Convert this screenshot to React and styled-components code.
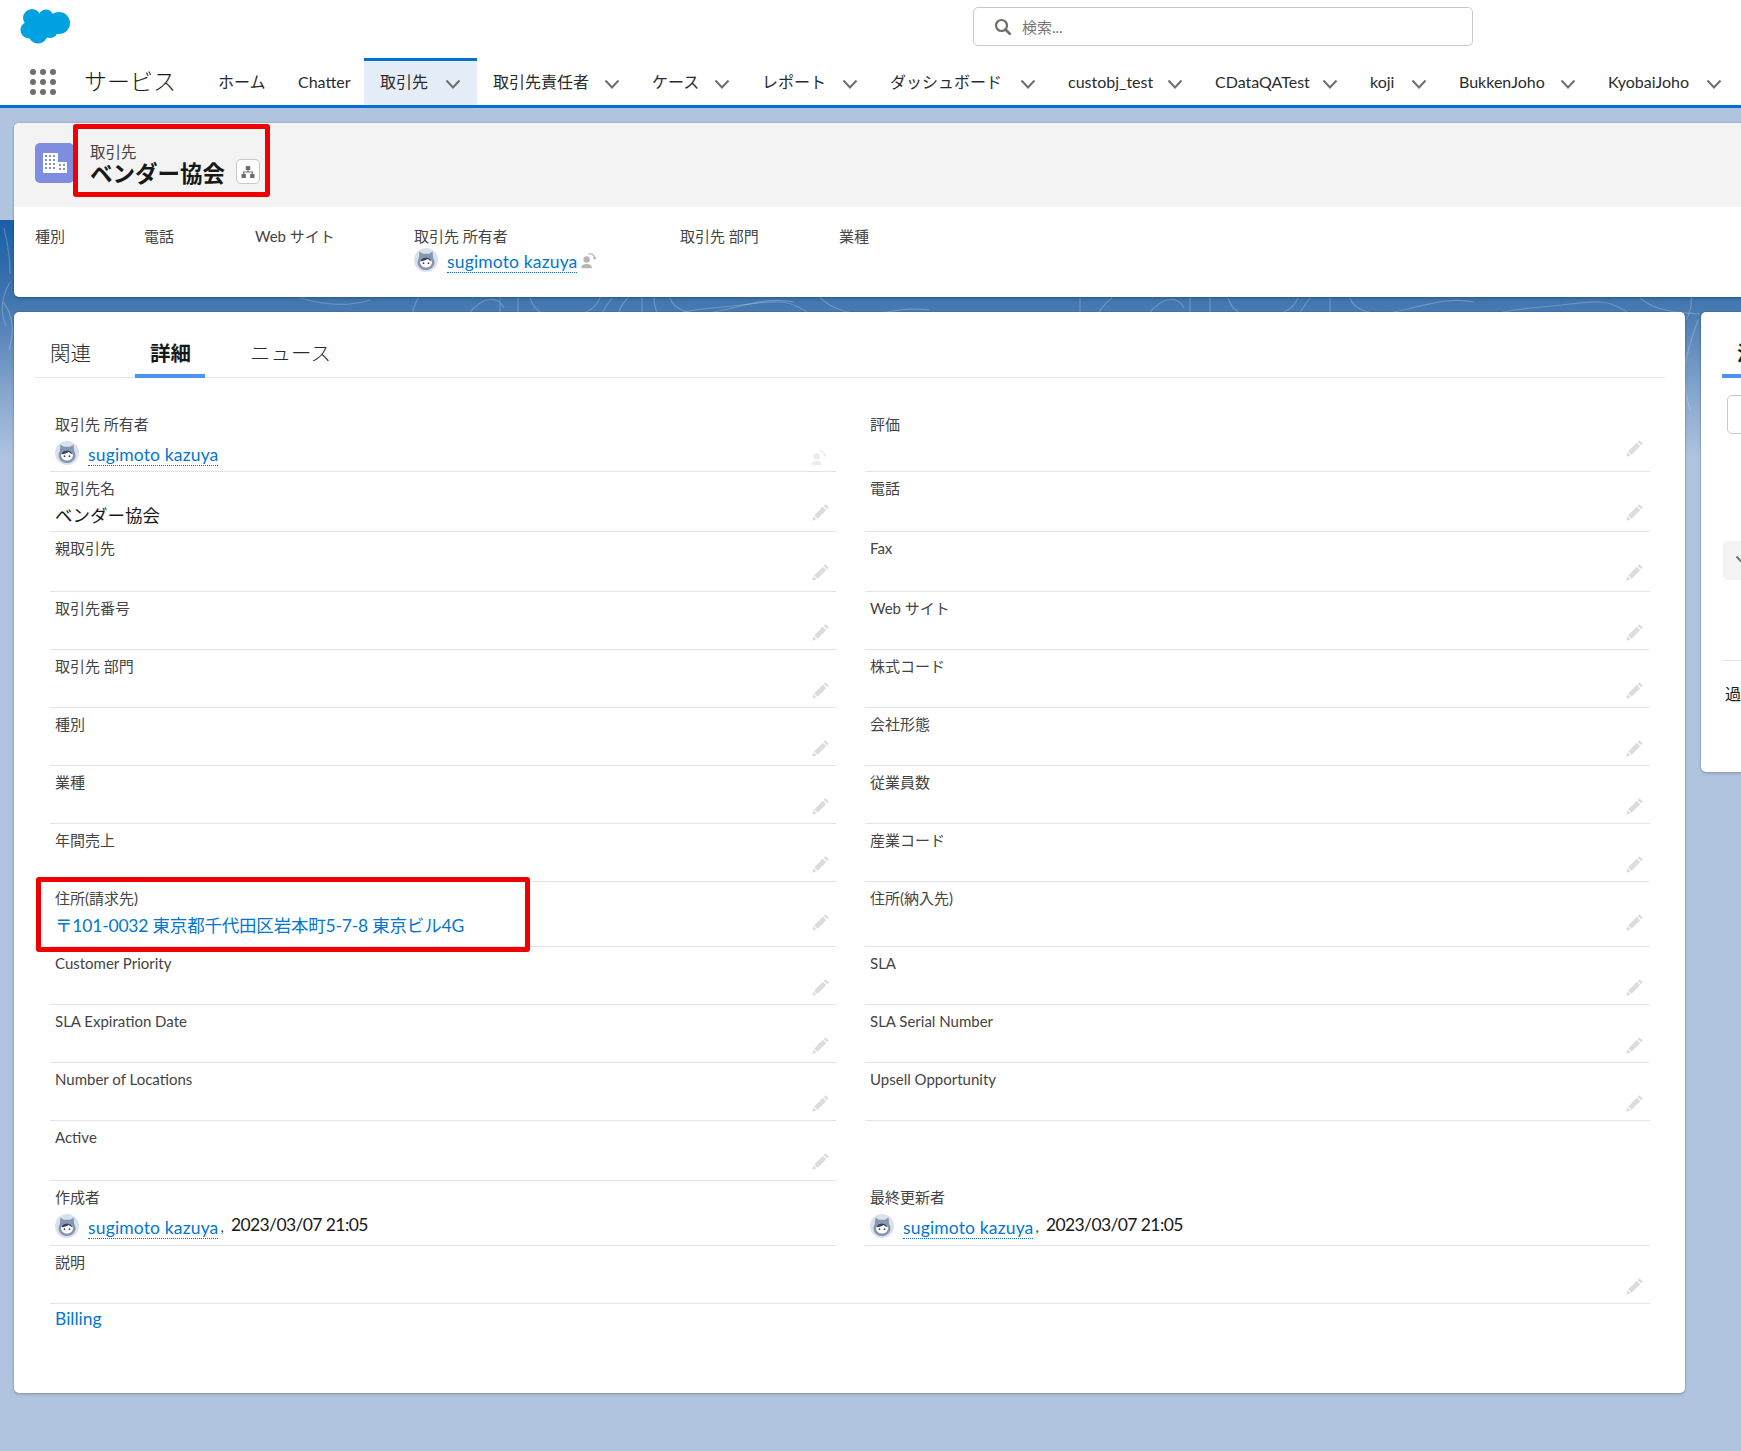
import React from "react"
import styled, { createGlobalStyle } from "styled-components"

const GlobalStyle = createGlobalStyle`
    html, body {
        margin: 0;
        padding: 0;
        background: #b0c4df;
        overflow: hidden;
    }
    body {
        font-family: "Lato", "Noto Sans CJK JP", sans-serif;
        color: #181818;
    }
    * {
        box-sizing: border-box;
    }
`

const Page = styled.div`
    position: relative;
    width: 1741px;
    height: 1451px;
    overflow: hidden;
    background: #b0c4df;
`

// ===== header =====
const Header = styled.header`
    position: relative;
    z-index: 1;
    height: 108px;
    background: #fff;
    border-bottom: 3px solid #0070d2;
`

const TopBar = styled.div`
    height: 58px;
    display: flex;
    align-items: flex-start;
    padding-left: 20px;
`

const Logo = styled.svg`
    width: 50px;
    height: 36px;
    margin-top: 8px;
`

const SearchBox = styled.div`
    width: 500px;
    height: 39px;
    margin: 7px 0 0 903px;
    padding-left: 20px;
    display: flex;
    align-items: center;
    gap: 10px;
    background: #fff;
    border: 1px solid #c9c9c9;
    border-radius: 5px;
    font-size: 15px;
    color: #757575;
`

const NavBar = styled.nav`
    height: 47px;
    display: flex;
    align-items: stretch;
    padding-left: 30px;
`

const Launcher = styled.svg`
    width: 26px;
    height: 26px;
    margin-top: 11px;
    flex: none;
`

const AppName = styled.div`
    width: 118px;
    margin-left: 28px;
    flex: none;
    font-size: 23px;
    font-weight: 300;
    line-height: 46px;
    color: #181818;
`

const NavItem = styled.div`
    flex: none;
    width: ${props => props.$width}px;
    padding: 3px 16px 0 16px;
    display: flex;
    align-items: center;
    justify-content: space-between;
    font-size: 16px;
    color: #2b2b2b;
    white-space: nowrap;
    border-top: 3px solid ${props => props.$active ? "#0070d2" : "transparent"};
    background: ${props => props.$active ? "#e5eef8" : "transparent"};
    line-height: 1;
    & > span {
        position: relative;
        top: -3px;
    }
`

const Chevron = styled.svg`
    width: 16px;
    height: 10px;
    flex: none;
    position: relative;
    top: -1px;
`

// ===== background =====
const Backdrop = styled.svg`
    position: absolute;
    left: 0;
    top: 220px;
    width: 1741px;
    height: 240px;
`

// ===== page body =====
const Body = styled.main`
    position: relative;
    z-index: 1;
    padding: 15px 0 0 14px;
`

const Card = styled.section`
    position: relative;
    background: #fff;
    border-radius: 5px;
    box-shadow: 0 0 2px rgba(0, 0, 0, 0.3), 0 2px 3px rgba(0, 0, 0, 0.12);
`

const HighlightCard = styled(Card)`
    width: 1740px;
    height: 174px;
`

const HighlightHead = styled.div`
    height: 84px;
    display: flex;
    align-items: center;
    padding: 0 0 0 21px;
    background: #f3f3f3;
    border-radius: 5px 5px 0 0;
`

const ObjectIcon = styled.div`
    width: 39px;
    height: 40px;
    margin-top: -4px;
    flex: none;
    display: flex;
    align-items: center;
    justify-content: center;
    background: #7f8de1;
    border-radius: 5px;
`

const TitleBlock = styled.div`
    margin-left: 16px;
    padding-bottom: 7px;
`

const ObjectLabel = styled.div`
    font-size: 15.5px;
    line-height: 20px;
    color: #444;
`

const TitleLine = styled.div`
    display: flex;
    align-items: center;
    height: 19px;
    font-size: 22.5px;
    font-weight: 700;
    color: #181818;
`

const HierarchyButton = styled.div`
    width: 24px;
    height: 25px;
    flex: none;
    margin-left: 11px;
    display: flex;
    align-items: center;
    justify-content: center;
    background: #fff;
    border: 1px solid #c9c9c9;
    border-radius: 5px;
`

const HighlightFields = styled.div`
    display: flex;
    padding: 18px 0 0 21px;
`

const HighlightField = styled.div`
    flex: none;
    width: ${props => props.$width}px;
`

const HighlightLabel = styled.div`
    font-size: 15px;
    line-height: 22px;
    color: #444;
`

const OwnerValue = styled.div`
    display: flex;
    align-items: center;
    height: 26px;
    margin-top: ${props => props.$top || 0}px;
`

const OwnerLink = styled.span`
    margin-left: 9px;
    font-size: 17.5px;
    line-height: 21px;
    letter-spacing: 0.15px;
    color: #0176d3;
    border-bottom: 1px dotted #0176d3;
    position: relative;
    top: 2px;
    white-space: nowrap;
`

const RedFrame = styled.div`
    position: absolute;
    left: ${props => props.$left}px;
    top: ${props => props.$top}px;
    width: ${props => props.$width}px;
    height: ${props => props.$height}px;
    border: 5px solid #f00000;
    border-radius: 3px;
    z-index: 2;
    pointer-events: none;
`

const Columns = styled.div`
    display: grid;
    grid-template-columns: 1671px 300px;
    gap: 16px;
    margin-top: 15px;
`

const DetailCard = styled(Card)`
    height: 1081px;
    padding: 0 20px 0 21px;
`

const Tabs = styled.div`
    height: 66px;
    display: flex;
    border-bottom: 1px solid #e5e5e5;
`

const Tab = styled.div`
    width: ${props => props.$width}px;
    height: 66px;
    padding: 27px 0 0 ${props => props.$pad}px;
    font-size: 20.5px;
    line-height: 28px;
    font-weight: ${props => props.$active ? 700 : 300};
    color: ${props => props.$active ? "#181818" : "#2b2b2b"};
    border-bottom: 4px solid ${props => props.$active ? "#4a94f3" : "transparent"};
`

const FieldGrid = styled.div`
    display: grid;
    grid-template-columns: 786px 785px;
    column-gap: 29px;
    margin: 30px 0 0 15px;
`

const Row = styled.div`
    position: relative;
    height: ${props => props.$height}px;
    padding: 5px 0 0 5px;
    border-bottom: ${props => props.$plain ? "none" : "1px solid #e3e3e3"};
    grid-column: ${props => props.$wide ? "1 / -1" : "auto"};
`

const FieldLabel = styled.div`
    font-size: 15px;
    line-height: 22px;
    color: #444;
    white-space: nowrap;
`

const FieldValue = styled.div`
    margin-top: 5px;
    font-size: 17.5px;
    line-height: 24px;
    letter-spacing: ${props => props.$link ? "-0.2px" : "0"};
    color: ${props => props.$link ? "#0176d3" : "#181818"};
    white-space: nowrap;
`

const DateText = styled.span`
    margin-left: 7px;
    font-size: 17.5px;
    letter-spacing: -0.6px;
    color: #181818;
    position: relative;
    top: -2px;
`

const Comma = styled.span`
    margin-left: 2px;
    font-size: 15px;
    color: #444;
`

const RowIcon = styled.svg`
    position: absolute;
    right: 6px;
    top: 31px;
    width: 18px;
    height: 18px;
`

const OwnerSwap = styled.span`
    display: flex;
    margin-left: 3px;
    position: ${props => props.$corner ? "absolute" : "static"};
    right: 9px;
    top: 41px;
`

const BillingLink = styled.div`
    margin: 3px 0 0 20px;
    font-size: 17.5px;
    line-height: 24px;
    color: #0176d3;
`

// ===== side panel =====
const SideCard = styled(Card)`
    height: 460px;
    padding-left: 21px;
`

const SideTab = styled.div`
    height: 66px;
    padding: 27px 0 0 15px;
    font-size: 20.5px;
    font-weight: 700;
    line-height: 28px;
    border-bottom: 4px solid #4a94f3;
    white-space: nowrap;
`

const SideInput = styled.div`
    width: 200px;
    height: 39px;
    margin: 17px 0 0 5px;
    border: 1px solid #c9c9c9;
    border-radius: 5px;
`

const SideButton = styled.div`
    width: 200px;
    height: 39px;
    margin: 107px 0 0 1px;
    padding-left: 12px;
    display: flex;
    align-items: center;
    background: #f3f3f3;
    border-radius: 5px;
`

const SideDivider = styled.div`
    height: 1px;
    margin-top: 80px;
    background: #e5e5e5;
`

const SideText = styled.div`
    margin: 22px 0 0 3px;
    font-size: 16px;
    line-height: 22px;
    white-space: nowrap;
`

// ===== icons =====
const ChevronIcon = () => (
    <Chevron viewBox="0 0 16 10">
        <path d="M1.500 1.500 L8 8.500 L14.500 1.500" fill="none" stroke="#706e6b" strokeWidth="2" />
    </Chevron>
)

const Pencil = () => (
    <RowIcon viewBox="0 0 18 18">
        <path fill="#dcdcdc" d="M13.400 1.200l3.400 3.400-1.700 1.700-3.400-3.400zM10.800 3.800l3.400 3.400-8.600 8.600-3.400-3.400zM1.400 13.300l3.300 3.300-4.400 1.200z" />
    </RowIcon>
)

const ChangeOwner = ({ color, corner }) => (
    <OwnerSwap $corner={corner}>
        <svg viewBox="0 0 18 18" width="17" height="17">
            <circle cx="7" cy="8" r="3.400" fill={color} />
            <path fill={color} d="M1.500 16.500c0-2.600 2.400-3.800 5.500-3.800s5.500 1.200 5.500 3.800v.8h-11z" />
            <path fill="none" stroke={color} strokeWidth="1.300" d="M9 2.200c3-1 6 .6 6.600 4" />
            <path fill={color} d="M13.400 5.800h4.400l-2.200 2.600z" />
        </svg>
    </OwnerSwap>
)

const Avatar = () => (
    <svg viewBox="0 0 24 24" width="24" height="24" style={{ flex: "none" }}>
        <circle cx="12" cy="12" r="12" fill="#dbe1ea" />
        <path fill="#8496b2" d="M5.500 3.500l3.300 2.300h6.400l3.300-2.300.7 6.700c.9 1.300 1.300 2.600 1.300 4 0 4.500-3.800 7.800-8.500 7.800s-8.500-3.300-8.500-7.800c0-1.400.4-2.700 1.300-4z" />
        <ellipse cx="12" cy="14.200" rx="6" ry="5.300" fill="#fff" />
        <path fill="#3a4660" d="M6.200 13.200c.8-2.800 3.200-4 5.800-4s5 1.200 5.800 4c-1.800-.5-3.200-1.300-4-2.100-1.500 1.300-4.600 2-7.600 2.100z" />
        <circle cx="9.500" cy="15.200" r=".9" fill="#3a4660" />
        <circle cx="14.500" cy="15.200" r=".9" fill="#3a4660" />
    </svg>
)

const Owner = ({ top, children }) => (
    <OwnerValue $top={top}>
        <Avatar />
        <OwnerLink>sugimoto kazuya</OwnerLink>
        {children}
    </OwnerValue>
)

const BuildingIcon = () => (
    <svg viewBox="0 0 24 20" width="24" height="20">
        <path fill="#fff" fillRule="evenodd" d="M0 0h15v20H0zM2 2v2h2V2zm4 0v2h2V2zm4 0v2h2V2zM2 6v2h2V6zm4 0v2h2V6zm4 0v2h2V6zM2 10v2h2v-2zm4 0v2h2v-2zm4 0v2h2v-2zM2 14v2h2v-2zm4 0v2h2v-2zm4 0v2h2v-2z" />
        <path fill="#fff" fillRule="evenodd" d="M14 9h10v11H14zM16 11v2h2v-2zm4 0v2h2v-2zM16 15v2h2v-2zm4 0v2h2v-2z" />
    </svg>
)

const HierarchyIcon = () => (
    <svg viewBox="0 0 14 14" width="14" height="14">
        <rect x="4.800" y="1" width="4.400" height="4" rx=".6" fill="#706e6b" />
        <rect x="0.500" y="9" width="4.400" height="4" rx=".6" fill="#706e6b" />
        <rect x="9.100" y="9" width="4.400" height="4" rx=".6" fill="#706e6b" />
        <path d="M7 5v2M2.700 9V7h8.600v2" fill="none" stroke="#706e6b" strokeWidth="1.200" />
    </svg>
)

const SearchIcon = () => (
    <svg viewBox="0 0 18 18" width="18" height="18">
        <circle cx="7.500" cy="7.500" r="5.500" fill="none" stroke="#706e6b" strokeWidth="2.200" />
        <path d="M11.500 11.500l5 5" stroke="#706e6b" strokeWidth="2.600" />
    </svg>
)

// ===== data =====
const navItems = [
    { label: "ホーム", width: 80 },
    { label: "Chatter", width: 82 },
    { label: "取引先", width: 113, menu: true, active: true },
    { label: "取引先責任者", width: 159, menu: true },
    { label: "ケース", width: 110, menu: true },
    { label: "レポート", width: 128, menu: true },
    { label: "ダッシュボード", width: 178, menu: true },
    { label: "custobj_test", width: 147, menu: true },
    { label: "CDataQATest", width: 155, menu: true },
    { label: "koji", width: 89, menu: true },
    { label: "BukkenJoho", width: 149, menu: true },
    { label: "KyobaiJoho", width: 146, menu: true },
]

const rows = [
    { height: 64, left: "取引先 所有者", right: "評価", owner: true },
    { height: 60, left: "取引先名", right: "電話", value: "ベンダー協会" },
    { height: 60, left: "親取引先", right: "Fax" },
    { height: 58, left: "取引先番号", right: "Web サイト" },
    { height: 58, left: "取引先 部門", right: "株式コード" },
    { height: 58, left: "種別", right: "会社形態" },
    { height: 58, left: "業種", right: "従業員数" },
    { height: 58, left: "年間売上", right: "産業コード" },
    { height: 65, left: "住所(請求先)", right: "住所(納入先)", address: "〒101-0032 東京都千代田区岩本町5-7-8 東京ビル4G" },
    { height: 58, left: "Customer Priority", right: "SLA" },
    { height: 58, left: "SLA Expiration Date", right: "SLA Serial Number" },
    { height: 58, left: "Number of Locations", right: "Upsell Opportunity" },
    { height: 60, left: "Active" },
]

const highlights = [
    { label: "種別", width: 109 },
    { label: "電話", width: 111 },
    { label: "Web サイト", width: 159 },
    { label: "取引先 所有者", width: 266, owner: true },
    { label: "取引先 部門", width: 159 },
    { label: "業種", width: 100 },
]

const App = () => {
    return (
        <Page>
            <GlobalStyle />
            <Backdrop viewBox="0 0 1741 240" preserveAspectRatio="none">
                <defs>
                    <linearGradient id="band" x1="0" y1="0" x2="0" y2="1">
                        <stop offset="0" stopColor="#1a5ea6" />
                        <stop offset="0.33" stopColor="#4075ae" />
                        <stop offset="0.75" stopColor="#8ba9d0" />
                        <stop offset="1" stopColor="#b0c4df" />
                    </linearGradient>
                </defs>
                <rect width="1741" height="240" fill="url(#band)" />
                <g fill="none" stroke="#fff" strokeOpacity="0.22" strokeWidth="1.2">
                    <path d="M300 78c20 6 45 10 70 2M418 78c-4 8-6 14-6 20M470 92c14-16 28-16 34-4M500 78v20M518 78v20M530 78c6 18 20 20 40 18s26-10 30-18M612 78c-6 8-10 14-12 20M628 78c-8 8-10 14-10 20M642 78v20M654 78c0 8 2 14 6 20M670 78c4 12 20 18 44 14s50-16 80-10" />
                    <path d="M660 98c30-10 60-10 90-14s40-4 60 10M820 78c10 8 20 14 40 16s40-8 70-4M1080 78v18M1112 78c-10 8-14 14-16 20M1150 92c14-16 28-16 34-4M1190 78v20M1210 78v20M1228 78c6 18 20 20 40 18s26-10 30-18M1310 78c-6 8-10 14-12 20M1330 78v20M1350 78c4 12 20 18 44 14s50-16 80-10M1480 98c30-10 60-10 90-14s40-4 60 10M1640 78c10 8 20 14 60 16" />
                    <path d="M4 8c4 16 6 30 6 46M3 82c10 12 12 30 6 48M10 62c-8 14-10 30-4 44M1690 6c-14 4-20 6-4 10M1688 60c4 14 6 26-2 40M1698 100c-10 30-20 50-8 90" />
                </g>
            </Backdrop>

            <Header>
                <TopBar>
                    <Logo viewBox="0 0 50 36">
                        <g fill="#00a1e0">
                            <circle cx="12" cy="10" r="9" />
                            <circle cx="26" cy="9" r="7.500" />
                            <circle cx="39" cy="15" r="11" />
                            <circle cx="9" cy="22" r="8.500" />
                            <circle cx="18" cy="26" r="9.500" />
                            <circle cx="30" cy="22" r="8" />
                            <circle cx="22" cy="16" r="9" />
                        </g>
                    </Logo>
                    <SearchBox>
                        <SearchIcon />
                        検索...
                    </SearchBox>
                </TopBar>
                <NavBar>
                    <Launcher viewBox="0 0 26 26">
                        <g fill="#706e6b">
                            {[3, 13, 23].map(y => [3, 13, 23].map(x => (
                                <circle key={`${x}-${y}`} cx={x} cy={y} r="3" />
                            )))}
                        </g>
                    </Launcher>
                    <AppName>サービス</AppName>
                    {navItems.map(item => (
                        <NavItem key={item.label} $width={item.width} $active={item.active}>
                            <span>{item.label}</span>
                            {item.menu ? <ChevronIcon /> : null}
                        </NavItem>
                    ))}
                </NavBar>
            </Header>

            <Body>
                <HighlightCard>
                    <HighlightHead>
                        <ObjectIcon><BuildingIcon /></ObjectIcon>
                        <TitleBlock>
                            <ObjectLabel>取引先</ObjectLabel>
                            <TitleLine>
                                ベンダー協会
                                <HierarchyButton><HierarchyIcon /></HierarchyButton>
                            </TitleLine>
                        </TitleBlock>
                    </HighlightHead>
                    <RedFrame $left={59} $top={1} $width={197} $height={73} />
                    <HighlightFields>
                        {highlights.map(field => (
                            <HighlightField key={field.label} $width={field.width}>
                                <HighlightLabel>{field.label}</HighlightLabel>
                                {field.owner ? (
                                    <Owner>
                                        <ChangeOwner color="#b5b5b5" />
                                    </Owner>
                                ) : null}
                            </HighlightField>
                        ))}
                    </HighlightFields>
                </HighlightCard>

                <Columns>
                    <DetailCard>
                        <Tabs>
                            <Tab $width={100} $pad={15}>関連</Tab>
                            <Tab $width={70} $pad={15} $active>詳細</Tab>
                            <Tab $width={160} $pad={45}>ニュース</Tab>
                        </Tabs>
                        <FieldGrid>
                            {rows.map(row => (
                                <React.Fragment key={row.left}>
                                    <Row $height={row.height}>
                                        <FieldLabel>{row.left}</FieldLabel>
                                        {row.owner ? <Owner top={5} /> : null}
                                        {row.value ? <FieldValue>{row.value}</FieldValue> : null}
                                        {row.address ? <FieldValue $link>{row.address}</FieldValue> : null}
                                        {row.owner ? <ChangeOwner color="#ececec" corner /> : <Pencil />}
                                        {row.address ? <RedFrame $left={-14} $top={-5} $width={494} $height={75} /> : null}
                                    </Row>
                                    {row.right ? (
                                        <Row $height={row.height}>
                                            <FieldLabel>{row.right}</FieldLabel>
                                            <Pencil />
                                        </Row>
                                    ) : <Row $height={row.height} $plain />}
                                </React.Fragment>
                            ))}
                            <Row $height={65}>
                                <FieldLabel>作成者</FieldLabel>
                                <Owner top={5}>
                                    <Comma>,</Comma>
                                    <DateText>2023/03/07 21:05</DateText>
                                </Owner>
                            </Row>
                            <Row $height={65}>
                                <FieldLabel>最終更新者</FieldLabel>
                                <Owner top={5}>
                                    <Comma>,</Comma>
                                    <DateText>2023/03/07 21:05</DateText>
                                </Owner>
                            </Row>
                            <Row $height={58} $wide>
                                <FieldLabel>説明</FieldLabel>
                                <Pencil />
                            </Row>
                        </FieldGrid>
                        <BillingLink>Billing</BillingLink>
                    </DetailCard>

                    <SideCard>
                        <SideTab>活動</SideTab>
                        <SideInput />
                        <SideButton>
                            <ChevronIcon />
                        </SideButton>
                        <SideDivider />
                        <SideText>過去の活動</SideText>
                    </SideCard>
                </Columns>
            </Body>
        </Page>
    )
}

export default App
